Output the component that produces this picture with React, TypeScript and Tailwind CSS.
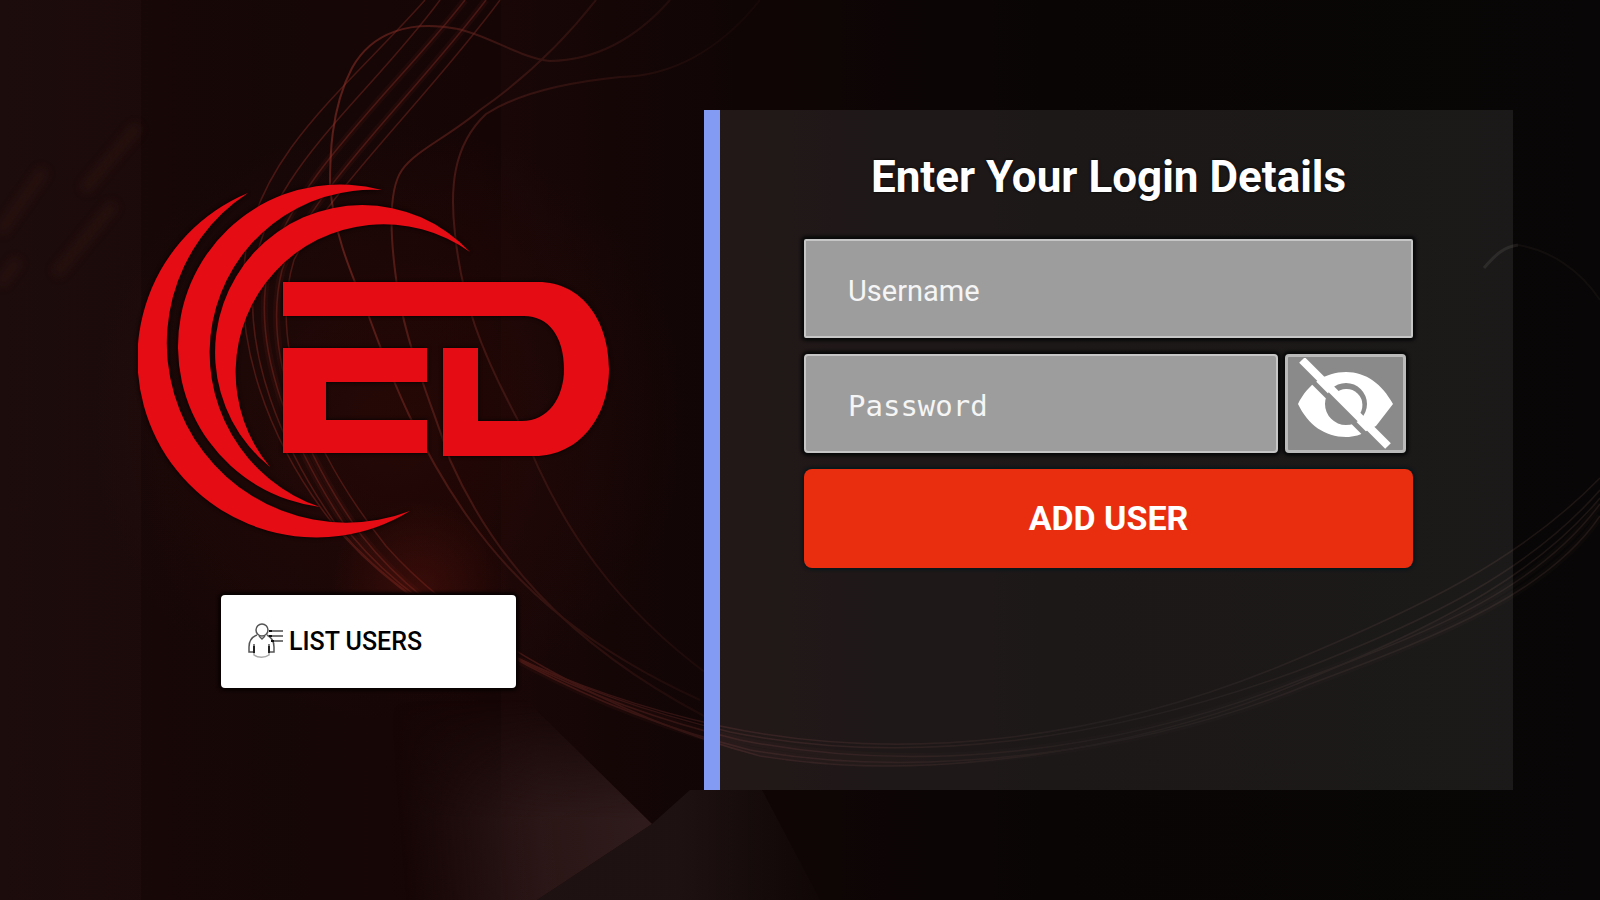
import React, { useState } from 'react';

const STRANDS = [
  'M425 0C350 85 262 150 246 250C232 340 268 440 330 520C410 620 560 690 720 726C900 764 1100 742 1290 662C1420 608 1520 560 1600 478',
  'M440 0C370 95 275 165 256 260C240 350 282 450 340 530C420 624 570 694 730 732C910 768 1110 740 1300 670C1430 620 1530 570 1600 490',
  'M465 0C395 90 290 180 268 270C252 350 290 445 352 536C430 630 590 704 740 740C920 776 1120 752 1300 680C1440 630 1540 585 1600 504',
  'M486 0C410 100 310 190 282 270C262 350 300 450 362 536C440 636 600 712 750 750C920 780 1140 754 1310 684C1450 632 1550 590 1600 516',
  'M500 0C430 95 330 190 294 260C268 345 310 450 386 546C460 630 610 716 760 756C930 784 1150 750 1320 674C1450 620 1540 570 1600 498',
];

const LOOPS = [
  'M670 0C640 34 600 60 550 61C520 58 490 36 458 29C410 20 372 32 352 68C330 110 330 160 330 186C334 230 346 262 368 314C392 380 420 450 470 520C520 590 590 650 700 700',
  'M596 0C560 46 520 82 480 110C450 136 416 150 402 170C388 190 390 240 398 292C408 350 430 400 450 460C490 550 560 640 704 716',
  'M760 0C720 50 672 76 620 77C570 82 520 92 486 114C452 146 450 190 455 234C462 300 480 350 520 424C560 530 620 610 710 676',
];

const Backdrop: React.FC = () => (
  <svg
    className="absolute inset-0 h-full w-full"
    viewBox="0 0 1600 900"
    preserveAspectRatio="xMidYMid slice"
    aria-hidden="true"
  >
    <defs>
      <linearGradient id="base" x1="0" x2="1" y1="0" y2="0">
        <stop offset="0" stopColor="#1d0c0c" />
        <stop offset="0.3" stopColor="#1a0707" />
        <stop offset="0.46" stopColor="#100505" />
        <stop offset="0.65" stopColor="#0a0505" />
        <stop offset="1" stopColor="#080606" />
      </linearGradient>
      <radialGradient id="glow" gradientUnits="userSpaceOnUse" cx="390" cy="420" r="300">
        <stop offset="0" stopColor="#3a0c06" stopOpacity="0.4" />
        <stop offset="1" stopColor="#3a0c06" stopOpacity="0" />
      </radialGradient>
      <radialGradient id="ember" gradientUnits="userSpaceOnUse" cx="420" cy="590" r="90">
        <stop offset="0" stopColor="#7a1a10" stopOpacity="0.3" />
        <stop offset="1" stopColor="#7a1a10" stopOpacity="0" />
      </radialGradient>
      <linearGradient id="strand" gradientUnits="userSpaceOnUse" x1="200" x2="1600" y1="0" y2="0">
        <stop offset="0" stopColor="#8a2a22" />
        <stop offset="0.2" stopColor="#7c2a22" />
        <stop offset="0.4" stopColor="#452020" />
        <stop offset="0.65" stopColor="#1d1615" />
        <stop offset="1" stopColor="#3a2a26" />
      </linearGradient>
      <linearGradient id="loop" gradientUnits="userSpaceOnUse" x1="320" x2="740" y1="0" y2="0">
        <stop offset="0" stopColor="#9a3228" />
        <stop offset="0.45" stopColor="#54201b" />
        <stop offset="1" stopColor="#1c0c0a" />
      </linearGradient>
      <linearGradient id="facet" gradientUnits="userSpaceOnUse" x1="400" x2="640" y1="830" y2="810">
        <stop offset="0" stopColor="#2f1a1a" stopOpacity="0" />
        <stop offset="0.6" stopColor="#2f1a1a" stopOpacity="0.85" />
        <stop offset="1" stopColor="#2f1b1b" />
      </linearGradient>
      <linearGradient id="facet-top" x1="0" x2="0" y1="0" y2="1">
        <stop offset="0" stopColor="#000" />
        <stop offset="0.6" stopColor="#fff" />
      </linearGradient>
      <mask id="facet-fade">
        <rect x="300" y="700" width="400" height="200" fill="url(#facet-top)" />
      </mask>
      <linearGradient id="floor" x1="0" x2="1" y1="0" y2="0">
        <stop offset="0" stopColor="#201414" stopOpacity="0.8" />
        <stop offset="0.5" stopColor="#201414" stopOpacity="0.8" />
        <stop offset="1" stopColor="#201414" stopOpacity="0.1" />
      </linearGradient>
      <filter id="soft" x="-20%" y="-20%" width="140%" height="140%">
        <feGaussianBlur stdDeviation="5" />
      </filter>
    </defs>
    <rect width="1600" height="900" fill="url(#base)" />
    <rect x="141" width="360" height="900" fill="#0c0304" opacity="0.3" />
    <rect width="1600" height="900" fill="url(#glow)" />
    <g stroke="#3a1c12" strokeWidth="10" fill="none" opacity="0.35" filter="url(#soft)">
      <path d="M138 126L84 190M114 204L56 274M44 170L0 232" />
      <path d="M18 260L0 284" />
    </g>
    <g mask="url(#facet-fade)">
      <path d="M370 900V690H516L652 824L537 900Z" fill="url(#facet)" />
    </g>
    <path d="M652 824L537 900H820L762 790H690Z" fill="url(#floor)" />
    <g stroke="url(#strand)" strokeWidth="7" fill="none" opacity="0.1">
      <path d={STRANDS[2]} />
      <path d={STRANDS[3]} />
    </g>
    <g stroke="url(#strand)" strokeWidth="1.5" fill="none" opacity="0.45">
      {STRANDS.map((d) => (
        <path key={d} d={d} />
      ))}
    </g>
    <g stroke="url(#loop)" strokeWidth="2" fill="none" opacity="0.55">
      {LOOPS.map((d) => (
        <path key={d} d={d} />
      ))}
    </g>
    <rect width="1600" height="900" fill="url(#ember)" />
    <path d="M1484 268C1496 254 1504 247 1518 245" stroke="#2a2724" strokeWidth="3" fill="none" opacity="0.6" />
    <path d="M1518 245C1550 250 1580 270 1600 300" stroke="#2a2724" strokeWidth="2" fill="none" opacity="0.25" />
  </svg>
);

const Logo: React.FC = () => (
  <svg
    className="block w-full drop-shadow-[0_0_2px_#000]"
    viewBox="138 183 472 356"
    fill="#e50c14"
    role="img"
    aria-label="ED"
  >
    <path d="M248 193A179 179 0 1 0 410 511A179.5 179.5 0 0 1 248 193Z" />
    <path d="M382 190A161.9 161.9 0 1 0 320 507A163 163 0 0 1 382 190Z" />
    <path d="M470 252A147.2 147.2 0 1 0 270 467A148 148 0 0 1 470 252Z" />
    <rect x="283" y="348" width="43" height="105" />
    <rect x="283" y="348" width="144" height="34" />
    <rect x="283" y="420" width="144" height="33" />
    <path d="M283 282H538C583 282 609 322 609 369C609 418 578 456 535 456H443V348H478V421H522C548 421 564 398 564 369C564 337 549 316 524 316H283Z" />
  </svg>
);

const UserListIcon: React.FC = () => (
  <svg className="mb-1 h-9 w-9" viewBox="0 0 36 36" fill="none" stroke="#555" strokeWidth="1.5" aria-hidden="true">
    <circle cx="14" cy="8" r="6" />
    <path d="M9 13C4 15 1 19 1 25V30H6V22M19 13C23 15 26 19 26 25V30H21V22" />
    <path d="M6 30V33C10 36 17 36 21 33V30" stroke="#aaa" />
    <path d="M11 14L14 17L17 14" />
    <path d="M22 9H35M22 14H35M24 19H35" stroke="#777" strokeWidth="2" />
    <path d="M21 9H24M21 14H24M23 19H26" stroke="#111" strokeWidth="2" />
    <path d="M6 24V31M21 24V31" stroke="#222" strokeWidth="2" />
  </svg>
);

const EyeIcon: React.FC<{ slashed: boolean }> = ({ slashed }) => (
  <svg className="w-24" viewBox="0 0 96 92" aria-hidden="true">
    <defs>
      <mask id="eye-cut">
        <rect width="96" height="92" fill="#fff" />
        {slashed && <path d="M-1 8L85 94" stroke="#000" strokeWidth="5" />}
      </mask>
    </defs>
    <g mask="url(#eye-cut)" fill="#fff">
      <path
        fillRule="evenodd"
        d="M0 46C10 26 27 14 48 14C68 14 84 26 95 46L78 68L70 72C63 77 56 79 48 79C27 79 10 67 0 46ZM48 25A21 21 0 1 0 48 67A21 21 0 1 0 48 25Z"
      />
      <path d={slashed ? 'M37 36A13 13 0 0 1 60 58Z' : 'M48 33A13 13 0 1 0 48 59A13 13 0 1 0 48 33Z'} />
    </g>
    {slashed && <path d="M4 2L90 88" stroke="#fff" strokeWidth="8" />}
  </svg>
);

const fieldClass =
  'h-[99px] border-2 border-[#c6c6c6] bg-[#9e9d9d] pt-1 pl-[42px] pr-4 text-[29px] text-white placeholder:text-[#f5f5f5] shadow-[0_0_3px_3px_#0a0a0a] outline-none';

const LoginForm: React.FC = () => {
  const [showPassword, setShowPassword] = useState(false);

  return (
    <form
      onSubmit={(e) => e.preventDefault()}
      className="flex flex-1 flex-col border-l-16 border-[#849bf3] bg-white/8 pt-[41px] pr-[100px] pl-[84px]"
    >
      <h1 className="mb-9 text-center text-[44px] leading-[52px] font-bold text-white [text-shadow:0_0_3px_#000]">
        Enter Your Login Details
      </h1>
      <div className="flex flex-col gap-4">
        <input
          type="text"
          aria-label="Username"
          placeholder="Username"
          className={`w-full rounded-xs ${fieldClass}`}
        />

        <div className="flex gap-[7px] pr-[7px]">
          <input
            type={showPassword ? 'text' : 'password'}
            aria-label="Password"
            placeholder="Password"
            className={`min-w-0 flex-1 rounded-sm font-['DejaVu_Sans_Mono',monospace] ${fieldClass}`}
          />
          <button
            type="button"
            aria-label="Show password"
            onClick={() => setShowPassword(!showPassword)}
            className="flex h-[99px] w-[121px] items-center justify-center rounded-sm border-3 border-[#bababa] bg-[#8b8a8a] shadow-[0_0_3px_3px_#0a0a0a]"
          >
            <EyeIcon slashed={!showPassword} />
          </button>
        </div>

        <button
          type="submit"
          className="h-[99px] w-full rounded-lg bg-[#e92d0f] text-[34px] font-bold text-white shadow-[0_0_3px_2px_#07171a]"
        >
          ADD USER
        </button>
      </div>
    </form>
  );
};

const App: React.FC = () => (
  <div className="relative min-h-screen overflow-hidden bg-[#0b0505] font-['Roboto',sans-serif]">
    <Backdrop />
    <main className="relative flex min-h-screen py-[110px] pr-[87px]">
      <section className="flex w-[44vw] shrink-0 justify-center pt-[73px] pl-11">
        <div className="w-[472px]">
          <Logo />
          <button
            type="button"
            className="mt-14 ml-[83px] flex h-[93px] w-[295px] items-center gap-[5px] rounded-sm bg-white pl-[27px] text-[25px] font-medium text-black shadow-[0_0_3px_3px_#0a0303]"
          >
            <UserListIcon />
            LIST USERS
          </button>
        </div>
      </section>
      <LoginForm />
    </main>
  </div>
);

export default App;
